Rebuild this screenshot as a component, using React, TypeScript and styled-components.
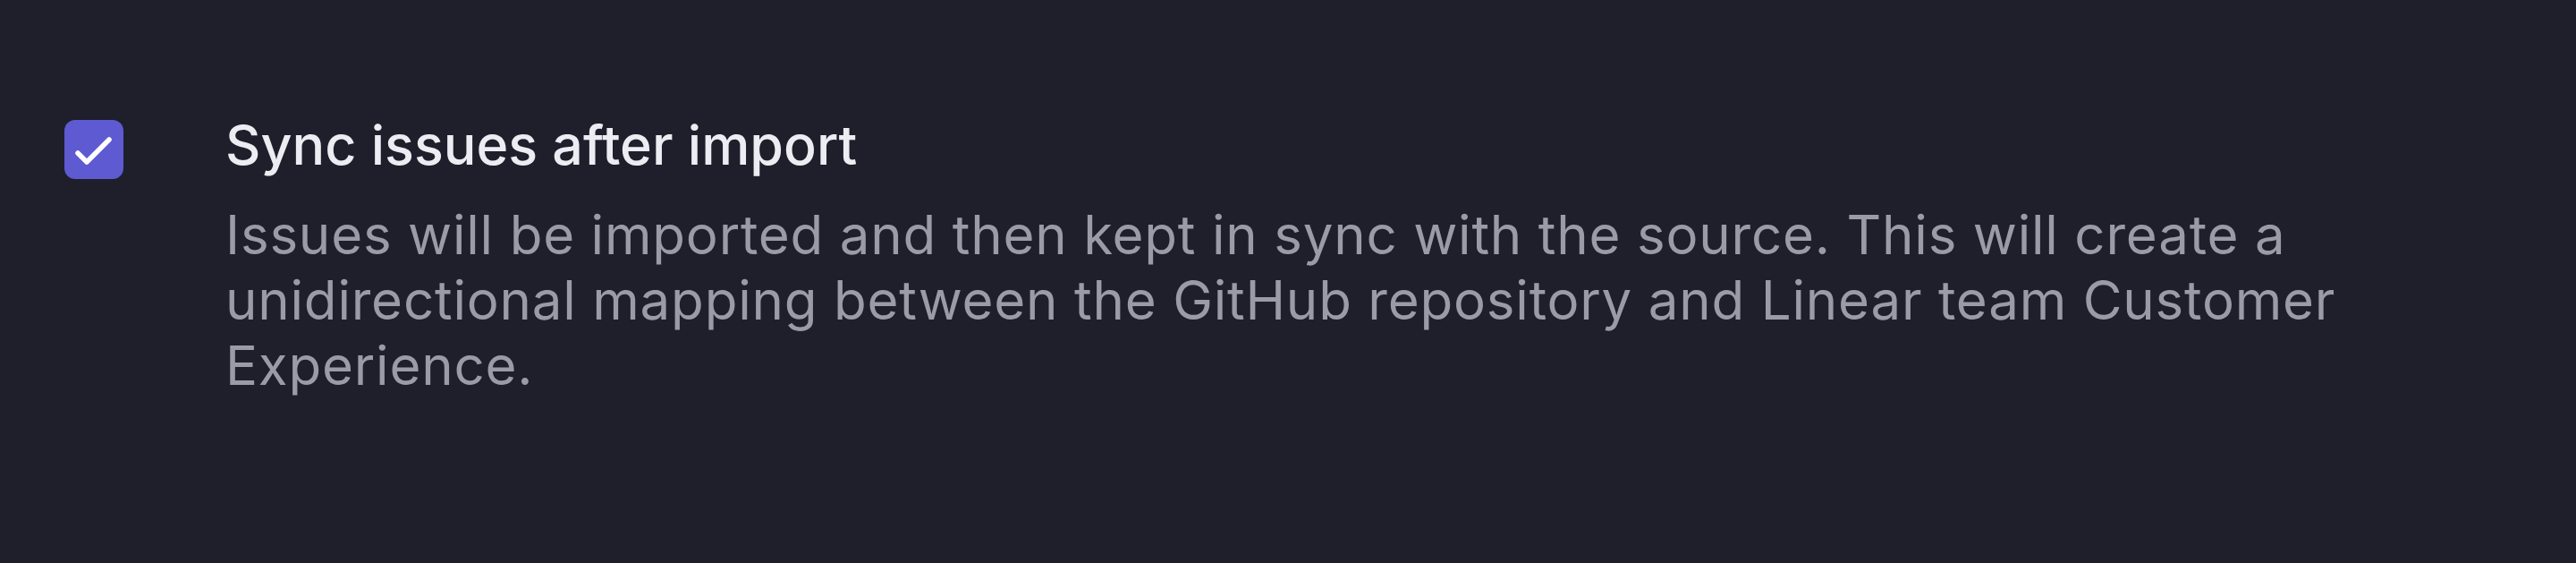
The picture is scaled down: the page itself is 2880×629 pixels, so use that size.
import styled, { createGlobalStyle } from 'styled-components';

const GlobalStyle = createGlobalStyle`
  html, body {
    margin: 0;
    padding: 0;
    background: #1f1f2b;
  }
  body {
    font-family: Inter, "Noto Sans", sans-serif;
    -webkit-font-smoothing: antialiased;
  }
`;

const Page = styled.div`
  height: 629px;
  background: #1f1f2b;
  padding: 134px 72px 0;
  box-sizing: border-box;
`;

const OptionRow = styled.label`
  display: flex;
  align-items: flex-start;
  gap: 114px;
  cursor: pointer;
`;

const Box = styled.span<{ checked: boolean }>`
  flex: none;
  width: 66px;
  height: 66px;
  border-radius: 12px;
  background: ${(p) => (p.checked ? '#5e5ad1' : 'transparent')};
  border: ${(p) => (p.checked ? 'none' : '3px solid #4a4a5a')};
  display: flex;
  align-items: center;
  justify-content: center;
`;

const Copy = styled.div`
  display: flex;
  flex-direction: column;
  gap: 32px;
  max-width: 2560px;
`;

const Title = styled.div`
  color: #ececf3;
  font-size: 61px;
  font-weight: 500;
  line-height: 64px;
  margin-top: -4px;
`;

const Description = styled.div`
  color: #9b9ba8;
  font-size: 60px;
  font-weight: 400;
  letter-spacing: 0.8px;
  line-height: 73px;
`;

function CheckIcon() {
  return (
    <svg width="66" height="66" viewBox="0 0 66 66" fill="none">
      <path
        d="M15 37 L25 47 L50 22"
        stroke="#fff"
        strokeWidth="5.5"
        strokeLinecap="round"
        strokeLinejoin="round"
      />
    </svg>
  );
}

export default function App() {
  const checked = true;
  return (
    <>
      <GlobalStyle />
      <Page>
        <OptionRow>
          <Box checked={checked}>{checked && <CheckIcon />}</Box>
          <Copy>
            <Title>Sync issues after import</Title>
            <Description>
              Issues will be imported and then kept in sync with the source. This will create a
              unidirectional mapping between the GitHub repository and Linear team Customer
              Experience.
            </Description>
          </Copy>
        </OptionRow>
      </Page>
    </>
  );
}
